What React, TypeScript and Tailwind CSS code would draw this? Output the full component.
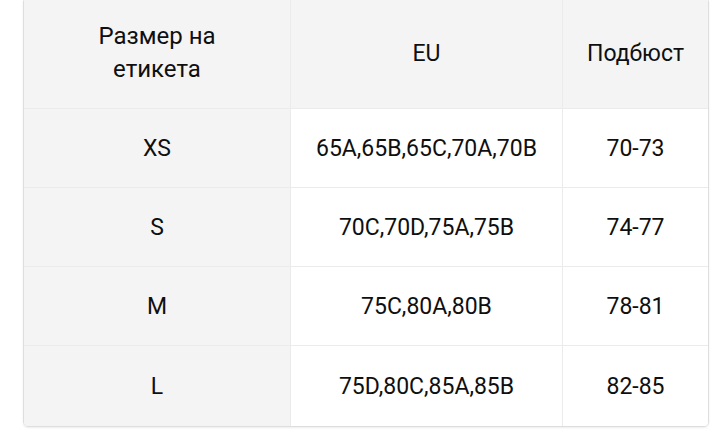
import React from 'react';

const rows = [
  { size: 'XS', eu: '65A,65B,65C,70A,70B', band: '70-73' },
  { size: 'S', eu: '70C,70D,75A,75B', band: '74-77' },
  { size: 'M', eu: '75C,80A,80B', band: '78-81' },
  { size: 'L', eu: '75D,80C,85A,85B', band: '82-85' },
];

const App = () => {
  return (
    <div
      className="w-[720px] h-[430px] overflow-hidden bg-white text-[#0f0f0f]"
      style={{ fontFamily: 'Roboto, "Liberation Sans", sans-serif' }}
    >
      <div className="ml-[23px] -mt-[3px] w-[686px] rounded-[5px] border border-[#dedede] overflow-hidden shadow-[0_1px_2px_rgba(0,0,0,0.08)]">
        <div className="grid grid-cols-[267px_272px_1fr] text-[23px] leading-[33px]">
          {/* header */}
          <div className="h-[111px] px-8 flex items-center justify-center text-center text-[24px] bg-[#f4f4f4] border-r border-b border-[#ebebeb]">
            Размер на етикета
          </div>
          <div className="h-[111px] flex items-center justify-center bg-[#f4f4f4] border-r border-b border-[#ebebeb]">
            EU
          </div>
          <div className="h-[111px] flex items-center justify-center bg-[#f4f4f4] border-b border-[#ebebeb]">
            Подбюст
          </div>

          {rows.map((r, i) => {
            const last = i === rows.length - 1;
            return (
              <React.Fragment key={r.size}>
                <div
                  className={
                    last
                      ? 'h-[80px] flex items-center justify-center bg-[#f4f4f4] border-r border-[#ebebeb]'
                      : 'h-[79px] flex items-center justify-center bg-[#f4f4f4] border-r border-b border-[#ebebeb]'
                  }
                >
                  {r.size}
                </div>
                <div
                  className={
                    last
                      ? 'h-[80px] flex items-center justify-center bg-white border-r border-[#ebebeb]'
                      : 'h-[79px] flex items-center justify-center bg-white border-r border-b border-[#ebebeb]'
                  }
                >
                  {r.eu}
                </div>
                <div
                  className={
                    last
                      ? 'h-[80px] flex items-center justify-center bg-white'
                      : 'h-[79px] flex items-center justify-center bg-white border-b border-[#ebebeb]'
                  }
                >
                  {r.band}
                </div>
              </React.Fragment>
            );
          })}
        </div>
      </div>
    </div>
  );
};

export default App;
